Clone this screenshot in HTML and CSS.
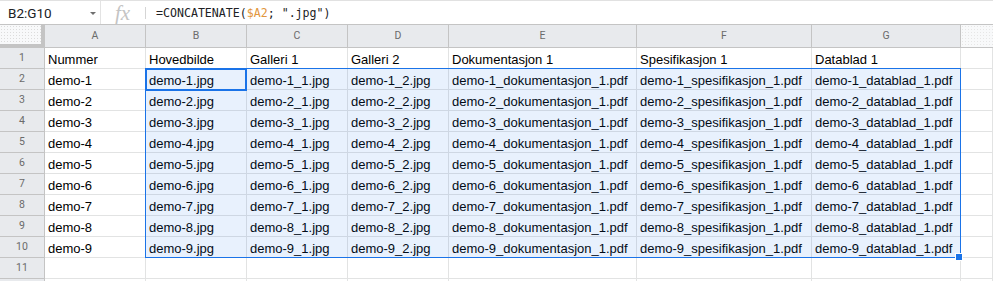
FILE: index.html
```html
<!DOCTYPE html>
<html>
<head>
<meta charset="utf-8">
<link rel="stylesheet" href="styles.css">
</head>
<body>
<div class="fbar">
  <div class="namebox"><span class="ref">B2:G10</span><span class="caret"></span></div>
  <div class="fx">fx</div>
  <div class="formula">=CONCATENATE(<span class="arg">$A2</span>; ".jpg")</div>
</div>
<div class="sheet">
  <div class="grid">
    <div class="corner"></div>
    <div class="ch">A</div><div class="ch">B</div><div class="ch">C</div><div class="ch">D</div><div class="ch">E</div><div class="ch">F</div><div class="ch">G</div><div class="ch extra"></div>

    <div class="rh">1</div><div class="c">Nummer</div><div class="c">Hovedbilde</div><div class="c">Galleri 1</div><div class="c">Galleri 2</div><div class="c">Dokumentasjon 1</div><div class="c">Spesifikasjon 1</div><div class="c">Datablad 1</div><div class="c"></div>

    <div class="rh">2</div><div class="c">demo-1</div><div class="c">demo-1.jpg</div><div class="c">demo-1_1.jpg</div><div class="c">demo-1_2.jpg</div><div class="c">demo-1_dokumentasjon_1.pdf</div><div class="c">demo-1_spesifikasjon_1.pdf</div><div class="c">demo-1_datablad_1.pdf</div><div class="c"></div>

    <div class="rh">3</div><div class="c">demo-2</div><div class="c">demo-2.jpg</div><div class="c">demo-2_1.jpg</div><div class="c">demo-2_2.jpg</div><div class="c">demo-2_dokumentasjon_1.pdf</div><div class="c">demo-2_spesifikasjon_1.pdf</div><div class="c">demo-2_datablad_1.pdf</div><div class="c"></div>

    <div class="rh">4</div><div class="c">demo-3</div><div class="c">demo-3.jpg</div><div class="c">demo-3_1.jpg</div><div class="c">demo-3_2.jpg</div><div class="c">demo-3_dokumentasjon_1.pdf</div><div class="c">demo-3_spesifikasjon_1.pdf</div><div class="c">demo-3_datablad_1.pdf</div><div class="c"></div>

    <div class="rh">5</div><div class="c">demo-4</div><div class="c">demo-4.jpg</div><div class="c">demo-4_1.jpg</div><div class="c">demo-4_2.jpg</div><div class="c">demo-4_dokumentasjon_1.pdf</div><div class="c">demo-4_spesifikasjon_1.pdf</div><div class="c">demo-4_datablad_1.pdf</div><div class="c"></div>

    <div class="rh">6</div><div class="c">demo-5</div><div class="c">demo-5.jpg</div><div class="c">demo-5_1.jpg</div><div class="c">demo-5_2.jpg</div><div class="c">demo-5_dokumentasjon_1.pdf</div><div class="c">demo-5_spesifikasjon_1.pdf</div><div class="c">demo-5_datablad_1.pdf</div><div class="c"></div>

    <div class="rh">7</div><div class="c">demo-6</div><div class="c">demo-6.jpg</div><div class="c">demo-6_1.jpg</div><div class="c">demo-6_2.jpg</div><div class="c">demo-6_dokumentasjon_1.pdf</div><div class="c">demo-6_spesifikasjon_1.pdf</div><div class="c">demo-6_datablad_1.pdf</div><div class="c"></div>

    <div class="rh">8</div><div class="c">demo-7</div><div class="c">demo-7.jpg</div><div class="c">demo-7_1.jpg</div><div class="c">demo-7_2.jpg</div><div class="c">demo-7_dokumentasjon_1.pdf</div><div class="c">demo-7_spesifikasjon_1.pdf</div><div class="c">demo-7_datablad_1.pdf</div><div class="c"></div>

    <div class="rh">9</div><div class="c">demo-8</div><div class="c">demo-8.jpg</div><div class="c">demo-8_1.jpg</div><div class="c">demo-8_2.jpg</div><div class="c">demo-8_dokumentasjon_1.pdf</div><div class="c">demo-8_spesifikasjon_1.pdf</div><div class="c">demo-8_datablad_1.pdf</div><div class="c"></div>

    <div class="rh">10</div><div class="c">demo-9</div><div class="c">demo-9.jpg</div><div class="c">demo-9_1.jpg</div><div class="c">demo-9_2.jpg</div><div class="c">demo-9_dokumentasjon_1.pdf</div><div class="c">demo-9_spesifikasjon_1.pdf</div><div class="c">demo-9_datablad_1.pdf</div><div class="c"></div>

    <div class="rh">11</div><div class="c"></div><div class="c"></div><div class="c"></div><div class="c"></div><div class="c"></div><div class="c"></div><div class="c"></div><div class="c"></div>

    <div class="rh"></div><div class="c"></div><div class="c"></div><div class="c"></div><div class="c"></div><div class="c"></div><div class="c"></div><div class="c"></div><div class="c"></div>
  </div>
  <div class="selection"></div>
  <div class="active"></div>
  <div class="handle"></div>
</div>
</body>
</html>
```

FILE: styles.css
```css
html, body {
  margin: 0;
  padding: 0;
  background: #ffffff;
  overflow: hidden;
}
body {
  width: 993px;
  height: 281px;
  font-family: "Liberation Sans", Arial, sans-serif;
}
.fbar {
  height: 23px;
  border-top: 1px solid #e1e1e1;
  display: flex;
  align-items: stretch;
  box-sizing: content-box;
}
.namebox {
  width: 101px;
  box-sizing: border-box;
  border-right: 1px solid #e3e3e3;
  display: flex;
  align-items: center;
  padding-left: 8px;
  position: relative;
}
.ref {
  font-family: Roboto, "Liberation Sans", sans-serif;
  font-size: 13.5px;
  color: #202124;
  line-height: 16px;
  margin-top: 1px;
}
.caret {
  margin-left: 38px;
  width: 0;
  height: 0;
  border-left: 3px solid transparent;
  border-right: 3px solid transparent;
  border-top: 3px solid #6f6f6f;
  margin-top: 2px;
}
.fx {
  width: 45px;
  box-sizing: border-box;
  display: flex;
  align-items: center;
  justify-content: center;
  font-family: "Liberation Serif", serif;
  font-style: italic;
  font-size: 21px;
  color: #c4c4c4;
  position: relative;
  line-height: 20px;
  padding-right: 2px;
}
.fx::after {
  content: "";
  position: absolute;
  right: 0;
  top: 6px;
  height: 12px;
  width: 1px;
  background: #d5d5d5;
}
.formula {
  display: flex;
  align-items: center;
  padding-left: 10px;
  font-family: "DejaVu Sans Mono", monospace;
  font-size: 11.6px;
  color: #202124;
  white-space: pre;
  margin-top: 1px;
}
.arg {
  color: #e2963c;
}
.sheet {
  position: relative;
}
.grid {
  display: grid;
  grid-template-columns: 45px 101px 101px 101px 101px 188px 175px 149px 1fr;
  grid-template-rows: 24px repeat(11, 21px) 3px;
}
.grid > div {
  box-sizing: border-box;
  overflow: hidden;
  white-space: nowrap;
}
.corner {
  border-top: 1px solid #c4c4c4;
  border-right: 4px solid #c4c4c4;
  border-bottom: 4px solid #c4c4c4;
  background-color: #f8f9fa;
  background-image: radial-gradient(#dcdcdc 0.8px, transparent 1px);
  background-size: 3px 3px;
}
.ch {
  background: #e8eaed;
  border-top: 1px solid #c4c4c4;
  border-right: 1px solid #c4c4c4;
  border-bottom: 1px solid #c4c4c4;
  font-family: Roboto, "Liberation Sans", sans-serif;
  font-size: 10.5px;
  color: #6b6b6b;
  text-align: center;
  line-height: 22px;
}
.ch.extra {
  background-color: #f8f9fa;
  background-image: radial-gradient(#e6e6e6 0.8px, transparent 1px);
  background-size: 3px 3px;
  border-right: none;
}
.rh {
  background: #e8eaed;
  border-right: 1px solid #c4c4c4;
  border-bottom: 1px solid #c4c4c4;
  font-family: Roboto, "Liberation Sans", sans-serif;
  font-size: 10.5px;
  color: #6b6b6b;
  text-align: center;
  line-height: 20px;
}
.c {
  border-right: 1px solid #e2e3e3;
  border-bottom: 1px solid #e2e3e3;
  font-size: 13px;
  color: #000000;
  line-height: 17px;
  padding: 3px 0 0 3px;
}
.selection {
  position: absolute;
  left: 145px;
  top: 44px;
  width: 816px;
  height: 190px;
  box-sizing: border-box;
  border: 1px solid #1a73e8;
  background: rgba(26, 115, 232, 0.1);
}
.active {
  position: absolute;
  left: 145px;
  top: 44px;
  width: 102px;
  height: 23px;
  box-sizing: border-box;
  border: 2px solid #1a73e8;
}
.handle {
  position: absolute;
  left: 956px;
  top: 230px;
  width: 6px;
  height: 6px;
  background: #1a73e8;
  outline: 1px solid #ffffff;
}
```
